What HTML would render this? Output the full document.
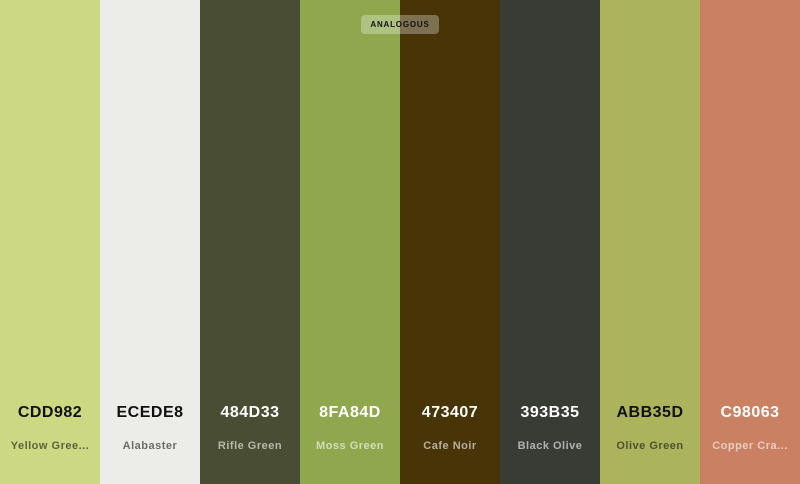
<!DOCTYPE html>
<html><head><meta charset="utf-8"><style>
*{margin:0;padding:0;box-sizing:border-box}
body{width:800px;height:484px;overflow:hidden;position:relative;font-family:"Liberation Sans",sans-serif}
.c{position:absolute;top:0;width:100px;height:484px;text-align:center}
.h{position:absolute;top:404px;left:0;width:100%;font-size:16px;font-weight:bold;letter-spacing:0.5px}
.n{position:absolute;top:440px;left:0;right:0;font-size:11px;font-weight:bold;letter-spacing:0.5px;white-space:nowrap}
.d .h{color:#111}.d .n{color:rgba(0,0,0,0.55)}
.l .h{color:#fff}.l .n{color:rgba(255,255,255,0.6)}
.b{position:absolute;left:361px;top:15px;width:78px;height:19px;border-radius:4px;background:rgba(255,255,255,0.3);font-size:8px;font-weight:bold;letter-spacing:0.8px;color:#111;text-align:center;line-height:19px}
</style></head><body>
<div class="c d" style="left:0;background:#CDD982"><div class="h">CDD982</div><div class="n">Yellow Gree...</div></div>
<div class="c d" style="left:100px;background:#ECEDE8"><div class="h">ECEDE8</div><div class="n">Alabaster</div></div>
<div class="c l" style="left:200px;background:#484D33"><div class="h">484D33</div><div class="n">Rifle Green</div></div>
<div class="c l" style="left:300px;background:#8FA84D"><div class="h">8FA84D</div><div class="n">Moss Green</div></div>
<div class="c l" style="left:400px;background:#473407"><div class="h">473407</div><div class="n">Cafe Noir</div></div>
<div class="c l" style="left:500px;background:#393B35"><div class="h">393B35</div><div class="n">Black Olive</div></div>
<div class="c d" style="left:600px;background:#ABB35D"><div class="h">ABB35D</div><div class="n">Olive Green</div></div>
<div class="c l" style="left:700px;background:#C98063"><div class="h">C98063</div><div class="n">Copper Cra...</div></div>
<div class="b">ANALOGOUS</div>
</body></html>
